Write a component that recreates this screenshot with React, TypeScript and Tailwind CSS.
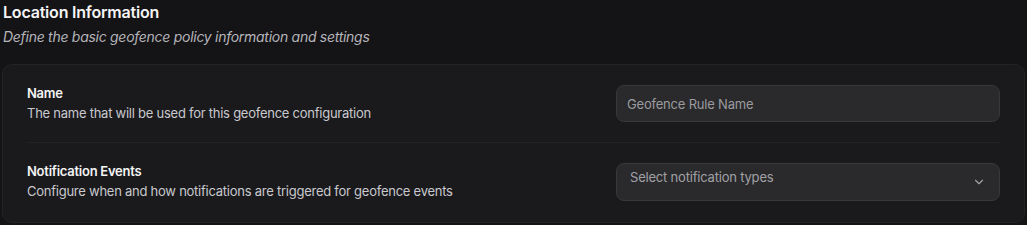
import React from "react";
import { ChevronDown } from "lucide-react";

function FieldRow({ label, description, children }: { label: string; description: string; children: React.ReactNode }) {
  return (
    <div className="flex items-center justify-between py-[18px]">
      <div className="flex flex-col tracking-[-0.25px]">
        <span className="text-[13px] font-semibold leading-5 text-[#f4f4f5]">{label}</span>
        <span className="text-[13px] leading-[21px] text-[#c9c9cd]">{description}</span>
      </div>
      {children}
    </div>
  );
}

export default function App(): JSX.Element {
  return (
    <div className="min-h-[225px] bg-[#141316] px-[2px] pt-[2px] font-['Inter',sans-serif]">
      <h2 className="px-[1px] text-base font-semibold leading-[21px] tracking-[-0.2px] text-[#f5f5f5]">
        Location Information
      </h2>
      <p className="mt-1 px-[1px] text-[14px] italic leading-5 tracking-[-0.28px] text-[#b5b5ba]">
        Define the basic geofence policy information and settings
      </p>
      <div className="mt-[17px] rounded-[10px] border border-[#232326] bg-[#1a1a1d] px-6 pb-[2px]">
        <div className="divide-y divide-[#242427]">
          <FieldRow label="Name" description="The name that will be used for this geofence configuration">
            <input
              type="text"
              placeholder="Geofence Rule Name"
              className="h-[37px] w-[384px] rounded-lg border border-[#38383c] bg-[#2a2a2d] px-[10px] text-[13px] tracking-[-0.2px] text-white outline-none placeholder:text-[#9b9b9f]"
            />
          </FieldRow>
          <FieldRow label="Notification Events" description="Configure when and how notifications are triggered for geofence events">
            <button
              type="button"
              className="flex h-[38px] w-[384px] items-center justify-between rounded-lg border border-[#38383c] bg-[#2a2a2d] px-[13px] text-left"
            >
              <span className="-mt-2 text-[13px] tracking-[-0.2px] text-[#a1a1a5]">Select notification types</span>
              <ChevronDown className="h-[14px] w-[14px] text-[#a1a1a5]" strokeWidth={2} />
            </button>
          </FieldRow>
        </div>
      </div>
    </div>
  );
}
